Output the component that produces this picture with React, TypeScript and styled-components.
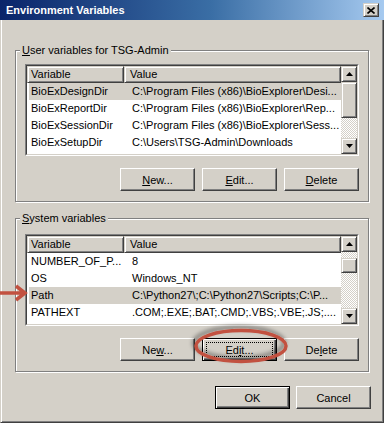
import React from 'react';
import styled, { createGlobalStyle, css } from 'styled-components';

type Row = { name: string; value: string; selected?: boolean };

const userVars: Row[] = [
  { name: 'BioExDesignDir', value: 'C:\\Program Files (x86)\\BioExplorer\\Desi...', selected: true },
  { name: 'BioExReportDir', value: 'C:\\Program Files (x86)\\BioExplorer\\Rep...' },
  { name: 'BioExSessionDir', value: 'C:\\Program Files (x86)\\BioExplorer\\Sess...' },
  { name: 'BioExSetupDir', value: 'C:\\Users\\TSG-Admin\\Downloads' },
];

const systemVars: Row[] = [
  { name: 'NUMBER_OF_P...', value: '8' },
  { name: 'OS', value: 'Windows_NT' },
  { name: 'Path', value: 'C:\\Python27\\;C:\\Python27\\Scripts;C:\\P...', selected: true },
  { name: 'PATHEXT', value: '.COM;.EXE;.BAT;.CMD;.VBS;.VBE;.JS;....' },
];

const raised = css`
  box-sizing: border-box;
  background: #d4d0c8;
  border: 1px solid;
  border-color: #d4d0c8 #404040 #404040 #d4d0c8;
  box-shadow: inset 1px 1px 0 #fff, inset -1px -1px 0 #808080;
`;

const GlobalStyle = createGlobalStyle`
  html, body {
    margin: 0;
    padding: 0;
    background: #d4d0c8;
  }
  body {
    font-family: 'Liberation Sans', Arial, sans-serif;
    font-size: 11px;
    color: #000;
  }
`;

const Window = styled.div`
  position: relative;
  width: 384px;
  height: 423px;
  display: flex;
  flex-direction: column;
  background: #d4d0c8;
  overflow: hidden;
`;

const TitleBar = styled.div`
  height: 20px;
  flex: none;
  display: flex;
  align-items: center;
  justify-content: space-between;
  padding: 0 5px 0 6px;
  background: linear-gradient(to right, #0a246a 0%, #3a6ea5 55%, #a6caf0 100%);
  color: #fff;
  font-weight: bold;
  font-size: 11px;
`;

const CloseButton = styled.div`
  ${raised};
  width: 16px;
  height: 14px;
  display: flex;
  align-items: center;
  justify-content: center;
`;

const Body = styled.div`
  flex: 1;
  display: flex;
  flex-direction: column;
  padding: 24px 14px 0;
  border-style: solid;
  border-width: 0 1px 1px 1px;
  border-color: #d4d0c8 #404040 #404040 #d4d0c8;
  box-shadow: inset 1px 0 0 #fff, inset -1px -1px 0 #808080;
`;

const Group = styled.fieldset<{ $top: number; $gap?: number }>`
  margin: ${p => p.$gap ?? 0}px 0 0;
  padding: ${p => p.$top}px 9px 10px 9px;
  min-inline-size: 0;
  border: 1px solid #808080;
  box-shadow: 1px 1px 0 #fff, inset 1px 1px 0 #fff;
`;

const Legend = styled.legend`
  margin-left: -5px;
  padding: 0 2px;
  line-height: 13px;
  background: #d4d0c8;
`;

const ListOuter = styled.div`
  height: 92px;
  box-sizing: border-box;
  border: 1px solid;
  border-color: #808080 #fff #fff #808080;
`;

const ListInner = styled.div`
  height: 100%;
  box-sizing: border-box;
  border: 1px solid;
  border-color: #404040 #d4d0c8 #d4d0c8 #404040;
  background: #fff;
  display: flex;
  overflow: hidden;
`;

const ListView = styled.div`
  flex: 1;
  min-width: 0;
  display: flex;
  flex-direction: column;
  overflow: hidden;
`;

const HeaderRow = styled.div`
  display: flex;
  height: 17px;
  flex: none;
`;

const HeaderCell = styled.div<{ $first?: boolean }>`
  ${raised};
  ${p => (p.$first ? 'width: 97px; flex: none; padding-left: 3px;' : 'flex: 1; padding-left: 5px;')}
  line-height: 15px;
  white-space: nowrap;
`;

const ItemRow = styled.div<{ $selected?: boolean }>`
  display: flex;
  height: 17px;
  flex: none;
  line-height: 17px;
  margin-left: 2px;
  background: ${p => (p.$selected ? '#d4d0c8' : 'transparent')};
`;

const NameCell = styled.div`
  width: 95px;
  flex: none;
  padding-left: 2px;
  overflow: hidden;
  white-space: nowrap;
`;

const ValueCell = styled.div`
  flex: 1;
  min-width: 0;
  padding-left: 6px;
  overflow: hidden;
  white-space: nowrap;
`;

const ScrollBar = styled.div`
  width: 16px;
  flex: none;
  display: flex;
  flex-direction: column;
`;

const ScrollButton = styled.div`
  ${raised};
  width: 16px;
  height: 16px;
  flex: none;
  display: flex;
  align-items: center;
  justify-content: center;
`;

const Track = styled.div`
  flex: 1;
  display: flex;
  flex-direction: column;
  background-image: repeating-conic-gradient(#d4d0c8 0 25%, #fff 0 50%);
  background-size: 2px 2px;
`;

const Thumb = styled.div<{ $offset: number; $size: number }>`
  ${raised};
  margin-top: ${p => p.$offset}px;
  height: ${p => p.$size}px;
  flex: none;
`;

const ButtonRow = styled.div`
  display: flex;
  justify-content: flex-end;
  gap: 7px;
  margin-top: 12px;
`;

const Button = styled.div<{ $default?: boolean; $focus?: boolean }>`
  position: relative;
  width: 75px;
  height: 23px;
  box-sizing: border-box;
  display: flex;
  align-items: center;
  justify-content: center;
  background: #d4d0c8;
  border: 1px solid;
  border-color: #fff #404040 #404040 #fff;
  box-shadow: inset -1px -1px 0 #808080, inset 1px 1px 0 #d4d0c8;
  ${p =>
    p.$default &&
    css`
      border-color: #000;
      box-shadow: inset 1px 1px 0 #fff, inset -1px -1px 0 #404040, inset -2px -2px 0 #808080;
    `}
  ${p =>
    p.$focus &&
    css`
      &::after {
        content: '';
        position: absolute;
        inset: 3px;
        border: 1px dotted #000;
      }
    `}
`;

const Footer = styled.div`
  display: flex;
  justify-content: flex-end;
  gap: 6px;
  margin: 14px -2px 0 0;
`;

const Overlay = styled.svg<{ $left: number; $top: number }>`
  position: absolute;
  left: ${p => p.$left}px;
  top: ${p => p.$top}px;
  overflow: visible;
  pointer-events: none;
`;

const UpArrow = () => (
  <svg width="7" height="4" viewBox="0 0 7 4">
    <polygon points="3.5,0 7,4 0,4" fill="#000" />
  </svg>
);

const DownArrow = () => (
  <svg width="7" height="4" viewBox="0 0 7 4">
    <polygon points="0,0 7,0 3.5,4" fill="#000" />
  </svg>
);

const VariableList: React.FC<{ rows: Row[]; thumbOffset: number; thumbSize: number }> = ({
  rows,
  thumbOffset,
  thumbSize,
}) => (
  <ListOuter>
    <ListInner>
      <ListView>
        <HeaderRow>
          <HeaderCell $first>Variable</HeaderCell>
          <HeaderCell>Value</HeaderCell>
        </HeaderRow>
        {rows.map(row => (
          <ItemRow key={row.name} $selected={row.selected}>
            <NameCell>{row.name}</NameCell>
            <ValueCell>{row.value}</ValueCell>
          </ItemRow>
        ))}
      </ListView>
      <ScrollBar>
        <ScrollButton>
          <UpArrow />
        </ScrollButton>
        <Track>
          <Thumb $offset={thumbOffset} $size={thumbSize} />
        </Track>
        <ScrollButton>
          <DownArrow />
        </ScrollButton>
      </ScrollBar>
    </ListInner>
  </ListOuter>
);

export default function App() {
  return (
    <>
      <GlobalStyle />
      <Window>
        <TitleBar>
          <span>Environment Variables</span>
          <CloseButton>
            <svg width="8" height="7" viewBox="0 0 8 7">
              <path d="M0.5 0.5 L7.5 6.5 M7.5 0.5 L0.5 6.5" stroke="#000" strokeWidth="1.6" />
            </svg>
          </CloseButton>
        </TitleBar>
        <Body>
          <Group $top={7}>
            <Legend>
              <u>U</u>ser variables for TSG-Admin
            </Legend>
            <VariableList rows={userVars} thumbOffset={0} thumbSize={36} />
            <ButtonRow>
              <Button>
                <span>
                  <u>N</u>ew...
                </span>
              </Button>
              <Button>
                <span>
                  <u>E</u>dit...
                </span>
              </Button>
              <Button>
                <span>
                  <u>D</u>elete
                </span>
              </Button>
            </ButtonRow>
          </Group>
          <Group $top={9} $gap={10}>
            <Legend>
              <u>S</u>ystem variables
            </Legend>
            <VariableList rows={systemVars} thumbOffset={6} thumbSize={15} />
            <ButtonRow>
              <Button>
                <span>
                  Ne<u>w</u>...
                </span>
              </Button>
              <Button $default $focus>
                <span>
                  Ed<u>i</u>t...
                </span>
              </Button>
              <Button>
                <span>
                  De<u>l</u>ete
                </span>
              </Button>
            </ButtonRow>
          </Group>
          <Footer>
            <Button $default>OK</Button>
            <Button>Cancel</Button>
          </Footer>
        </Body>

        <Overlay $left={0} $top={284} width="30" height="18" viewBox="0 0 30 18">
          <path
            d="M0 9 H24 M16 2 L25 9 L16 16"
            fill="none"
            stroke="#c25140"
            strokeWidth="3.5"
            strokeLinejoin="miter"
          />
        </Overlay>

        <Overlay $left={190} $top={326} width="104" height="42" viewBox="0 0 104 42">
          <defs>
            <filter id="ringShadow" x="-20%" y="-40%" width="140%" height="180%">
              <feDropShadow dx="-2" dy="-3" stdDeviation="2" floodColor="#000" floodOpacity="0.45" />
            </filter>
          </defs>
          <ellipse
            cx="51"
            cy="20"
            rx="45"
            ry="15.5"
            fill="none"
            stroke="#c25140"
            strokeWidth="3.5"
            filter="url(#ringShadow)"
          />
        </Overlay>
      </Window>
    </>
  );
}
